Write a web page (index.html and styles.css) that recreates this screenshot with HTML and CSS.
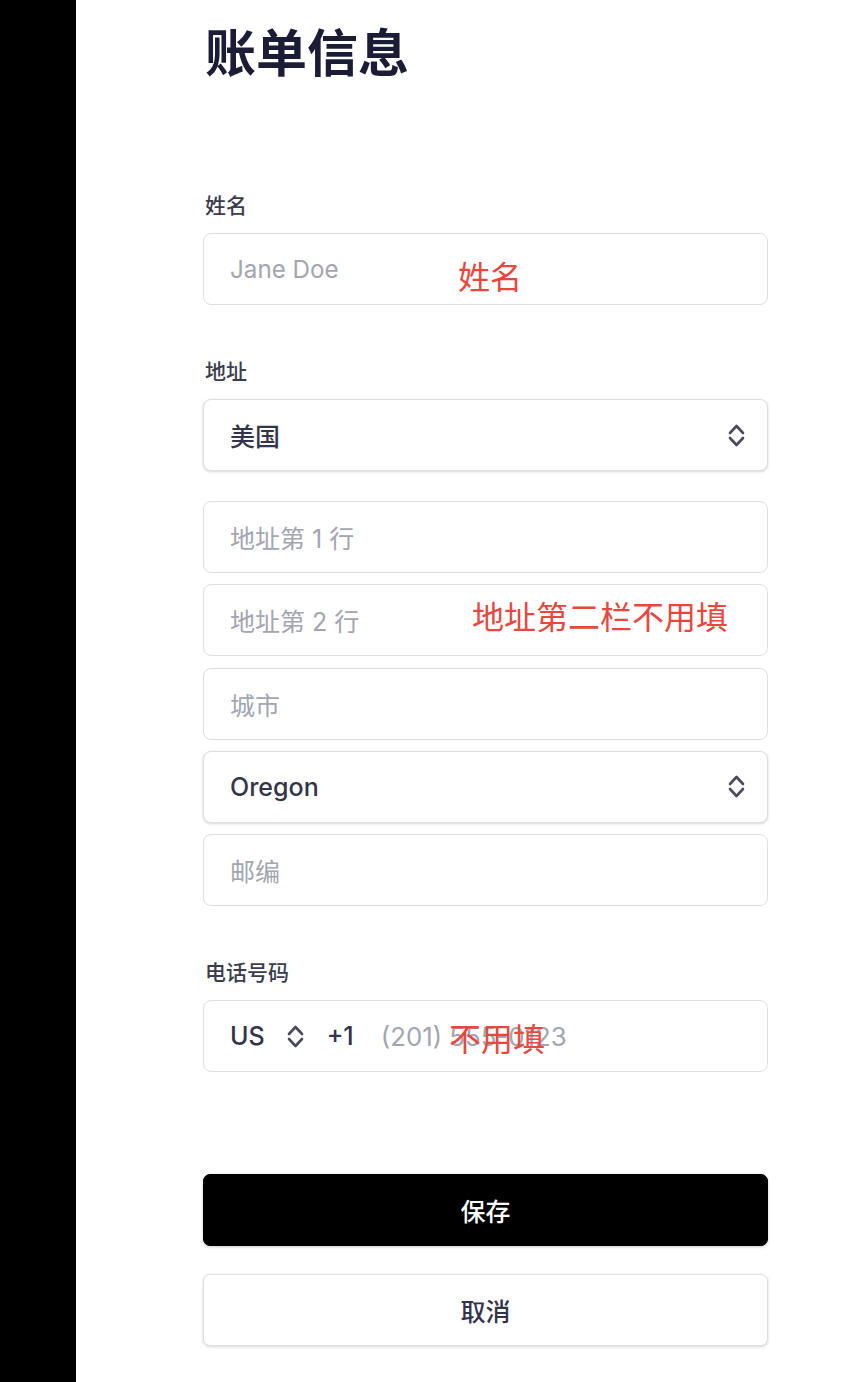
FILE: index.html
```html
<!DOCTYPE html>
<html lang="zh">
<head>
<meta charset="utf-8">
<title>账单信息</title>
<link rel="stylesheet" href="styles.css">
</head>
<body>
<div class="page">
  <aside class="sidebar"></aside>
  <main class="main">
    <form class="form">
      <h1 class="title">账单信息</h1>

      <div class="group">
        <label class="label">姓名</label>
        <div class="field">
          <span class="placeholder latin">Jane Doe</span>
          <span class="note note-name">姓名</span>
        </div>
      </div>

      <div class="group">
        <label class="label">地址</label>
        <div class="field select country">
          <span class="value">美国</span>
          <svg class="chev" width="17" height="25" viewBox="0 0 17 25"><path d="M2 10 L8.5 3 L15 10 M2 15 L8.5 22 L15 15" fill="none" stroke="#4a4b5e" stroke-width="2.6" stroke-linecap="round" stroke-linejoin="round"/></svg>
        </div>
        <div class="stack">
          <div class="field"><span class="placeholder">地址第 1 行</span></div>
          <div class="field">
            <span class="placeholder">地址第 2 行</span>
            <span class="note note-addr">地址第二栏不用填</span>
          </div>
          <div class="field"><span class="placeholder">城市</span></div>
          <div class="field select">
            <span class="value">Oregon</span>
            <svg class="chev" width="17" height="25" viewBox="0 0 17 25"><path d="M2 10 L8.5 3 L15 10 M2 15 L8.5 22 L15 15" fill="none" stroke="#4a4b5e" stroke-width="2.6" stroke-linecap="round" stroke-linejoin="round"/></svg>
          </div>
          <div class="field"><span class="placeholder">邮编</span></div>
        </div>
      </div>

      <div class="group">
        <label class="label">电话号码</label>
        <div class="field phone">
          <span class="value">US</span>
          <svg class="chev-sm" width="17" height="25" viewBox="0 0 17 25"><path d="M2 10 L8.5 3 L15 10 M2 15 L8.5 22 L15 15" fill="none" stroke="#4a4b5e" stroke-width="2.6" stroke-linecap="round" stroke-linejoin="round"/></svg>
          <span class="value code">+1</span>
          <span class="placeholder tel">(201) 555-0123</span>
          <span class="note note-phone">不用填</span>
        </div>
      </div>

      <div class="actions">
        <button type="button" class="btn btn-primary">保存</button>
        <button type="button" class="btn btn-secondary">取消</button>
      </div>
    </form>
  </main>
</div>
</body>
</html>
```

FILE: styles.css
```css
* { box-sizing: border-box; }
html, body { margin: 0; padding: 0; background: #ffffff; }
body {
  font-family: Inter, "Noto Sans CJK SC", sans-serif;
  color: #33344a;
}
.page {
  display: flex;
  min-height: 1382px;
}
.sidebar {
  width: 76px;
  flex: none;
  background: #000000;
}
.main {
  flex: 1;
  background: #ffffff;
}
.form {
  width: 565px;
  margin-left: 127px;
  padding-top: 24px;
  display: flex;
  flex-direction: column;
}
.title {
  margin: 0;
  font-size: 51px;
  line-height: 60px;
  font-weight: 700;
  color: #1b1c36;
  padding-left: 2px;
}
.group {
  display: flex;
  flex-direction: column;
  margin-top: 53px;
}
.group:first-of-type { margin-top: 108px; }
.label {
  font-size: 21px;
  line-height: 28px;
  font-weight: 500;
  color: #3b3c4e;
  margin-bottom: 13px;
  padding-left: 2px;
}
.field {
  position: relative;
  height: 72px;
  border: 1px solid #dedee3;
  border-radius: 8px;
  background: #ffffff;
  display: flex;
  align-items: center;
  padding: 0 22px 0 26px;
  font-size: 25px;
}
.select {
  justify-content: space-between;
  box-shadow: 0 1px 3px rgba(0, 0, 0, 0.16);
}
.country { margin-bottom: 30px; }
.stack {
  display: flex;
  flex-direction: column;
  gap: 11.33px;
}
.placeholder {
  color: #a3a5b0;
  font-weight: 400;
}
.placeholder.latin { font-size: 24.2px; }
.placeholder.tel { font-size: 25.8px; margin-left: 27px; }
.value {
  color: #33344a;
  font-weight: 500;
}
.chev-sm { margin-left: 22px; }
.code { margin-left: 23px; }
.note {
  position: absolute;
  color: #e8473e;
  font-size: 32px;
  line-height: 32px;
  font-weight: 400;
  white-space: nowrap;
}
.note-name { left: 254px; top: 28px; }
.note-addr { left: 268px; top: 17px; }
.note-phone { left: 245px; top: 23px; }
.actions {
  display: flex;
  flex-direction: column;
  gap: 28px;
  margin-top: 102px;
}
.btn {
  height: 72px;
  border-radius: 7px;
  font-family: Inter, "Noto Sans CJK SC", sans-serif;
  font-size: 25px;
  font-weight: 500;
  cursor: pointer;
}
.btn-primary {
  background: #000000;
  color: #ffffff;
  border: 1px solid #000000;
  box-shadow: 0 1px 3px rgba(0, 0, 0, 0.2);
}
.btn-secondary {
  background: #ffffff;
  color: #33344a;
  border: 1px solid #dedee3;
  box-shadow: 0 1px 3px rgba(0, 0, 0, 0.16);
}
```
